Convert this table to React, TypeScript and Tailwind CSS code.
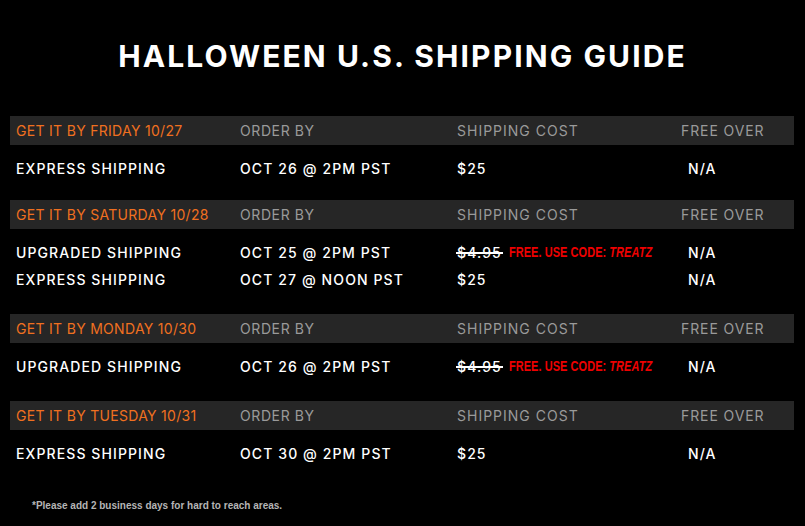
import React from "react";

type Row = { method: string; order: string; cost: "25" | "promo"; free: string };
type Section = { label: string; rows: Row[]; pb: string };

const sections: Section[] = [
    {
        label: "GET IT BY FRIDAY 10/27",
        rows: [{ method: "EXPRESS SHIPPING", order: "OCT 26 @ 2PM PST", cost: "25", free: "N/A" }],
        pb: "pb-[18px]",
    },
    {
        label: "GET IT BY SATURDAY 10/28",
        rows: [
            { method: "UPGRADED SHIPPING", order: "OCT 25 @ 2PM PST", cost: "promo", free: "N/A" },
            { method: "EXPRESS SHIPPING", order: "OCT 27 @ NOON PST", cost: "25", free: "N/A" },
        ],
        pb: "pb-[21px]",
    },
    {
        label: "GET IT BY MONDAY 10/30",
        rows: [{ method: "UPGRADED SHIPPING", order: "OCT 26 @ 2PM PST", cost: "promo", free: "N/A" }],
        pb: "pb-[21px]",
    },
    {
        label: "GET IT BY TUESDAY 10/31",
        rows: [{ method: "EXPRESS SHIPPING", order: "OCT 30 @ 2PM PST", cost: "25", free: "N/A" }],
        pb: "pb-[20px]",
    },
];

const cols = "grid grid-cols-[224px_217px_224px_1fr] pl-[6px] whitespace-nowrap";

function Cost({ kind }: { kind: Row["cost"] }) {
    if (kind === "25") return <span>$25</span>;
    return (
        <span className="flex items-center gap-[7px] min-w-0">
            <span className="relative">
                $4.95
                <span className="absolute left-[-1px] right-[-1px] top-1/2 h-[2px] -translate-y-[1px] bg-white" />
            </span>
            <span className="inline-block origin-left scale-x-[0.73] font-['Liberation_Sans',Arial,sans-serif] font-bold text-[15px] tracking-[0.1px] text-[#ee0000]">
                FREE. USE CODE: <span className="italic">TREATZ</span>
            </span>
        </span>
    );
}

export default function App() {
    return (
        <div className="w-[805px] h-[526px] bg-black overflow-hidden font-['Inter',sans-serif]">
            <div className="h-[116px] flex items-center justify-center pb-[4px]">
                <h1 className="text-white font-bold text-[30px] tracking-[2.1px] leading-none">
                    HALLOWEEN U.S. SHIPPING GUIDE
                </h1>
            </div>

            <div className="mx-[10px] w-[784px]">
                {sections.map((s) => (
                    <div key={s.label}>
                        <div className={`${cols} h-[29px] items-center bg-[#262626] text-[14px] font-normal tracking-[0.6px]`}>
                            <span className="text-[#f07020] tracking-[0.3px]">{s.label}</span>
                            <span className="text-[#9a9a9a]">ORDER BY</span>
                            <span className="text-[#9a9a9a] tracking-[1px]">SHIPPING COST</span>
                            <span className="text-[#9a9a9a] tracking-[0.9px]">FREE OVER</span>
                        </div>
                        <div className={`pt-[10px] ${s.pb}`}>
                            {s.rows.map((r) => (
                                <div
                                    key={r.method + r.order}
                                    className={`${cols} h-[27px] items-center text-white text-[14px] font-medium tracking-[1.1px]`}
                                >
                                    <span>{r.method}</span>
                                    <span>{r.order}</span>
                                    <Cost kind={r.cost} />
                                    <span className="pl-[7px]">{r.free}</span>
                                </div>
                            ))}
                        </div>
                    </div>
                ))}
            </div>

            <p className="pl-[32px] pt-[11px] text-[10px] font-bold text-[#b5b5b5] font-['Liberation_Sans',Arial,sans-serif]">
                *Please add 2 business days for hard to reach areas.
            </p>
        </div>
    );
}
